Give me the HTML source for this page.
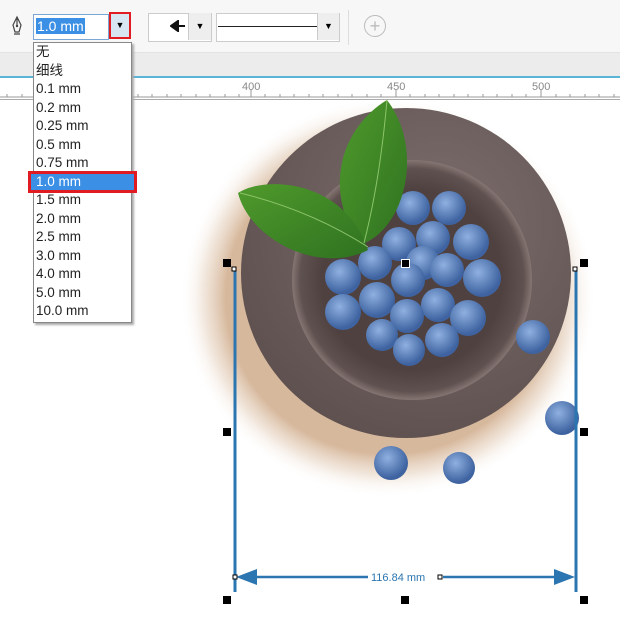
<!DOCTYPE html>
<html><head><meta charset="utf-8"><style>
body{margin:0;width:620px;height:617px;overflow:hidden;background:#fff;font-family:"Liberation Sans","Noto Sans CJK SC",sans-serif;position:relative}
.a{position:absolute}
#tb{left:0;top:0;width:620px;height:52px;background:#f7f7f7;border-bottom:1px solid #e2e2e2}
#band{left:0;top:53px;width:620px;height:23px;background:#ececec}
#bline{left:0;top:76px;width:620px;height:2px;background:#5ab4d6}
#ruler{left:0;top:78px;width:620px;height:21px;background:#fff;border-bottom:1px solid #aaa}
.rl{font-size:11px;color:#888;top:81px}
#dd{left:33px;top:42px;width:97px;height:279px;background:#fff;border:1px solid #888;box-shadow:2px 2px 2px #aaa}
#dd div{height:18.5px;line-height:18px;font-size:13.5px;color:#222;padding-left:2px}
.h{position:absolute;width:8px;height:8px;background:#000}
</style></head><body>
<div class="a" id="tb"></div>
<svg class="a" style="left:10px;top:15px" width="14" height="22"><path d="M7 2L3 10L5 17H9L11 10Z M7 2V11 M4 19H10" fill="none" stroke="#444" stroke-width="1.2"/><circle cx="7" cy="11" r="1.2" fill="#444"/></svg>
<div class="a" style="left:33px;top:14px;width:74px;height:24px;border:1px solid #7aa7d6;background:#fff"></div>
<div class="a" style="left:36px;top:18px;background:#3b8fe5;color:#fff;font-size:14px;line-height:16px;padding:0 1px">1.0 mm</div>
<div class="a" style="left:109px;top:12px;width:22px;height:27px;border:2px solid #e01b22;background:#d8e6f4;box-sizing:border-box;text-align:center;font-size:9px;line-height:23px">&#9660;</div>
<div class="a" style="left:148px;top:13px;width:62px;height:27px;border:1px solid #ccc;background:#fff"></div>
<svg class="a" style="left:170px;top:20px" width="16" height="12"><path d="M1 6L8 1V11Z M7 6H15" fill="#111" stroke="#111" stroke-width="2"/></svg>
<div class="a" style="left:188px;top:13px;width:22px;height:27px;border-left:1px solid #ccc;background:#eee;text-align:center;font-size:9px;line-height:27px">&#9660;</div>
<div class="a" style="left:216px;top:13px;width:122px;height:27px;border:1px solid #ccc;background:#fff"></div>
<div class="a" style="left:218px;top:26px;width:99px;height:1px;background:#222"></div>
<div class="a" style="left:317px;top:13px;width:21px;height:27px;border-left:1px solid #ccc;background:#eee;text-align:center;font-size:9px;line-height:27px">&#9660;</div>
<div class="a" style="left:348px;top:10px;width:1px;height:35px;background:#ddd"></div>
<div class="a" style="left:364px;top:15px;width:20px;height:20px;border:1px solid #bbb;border-radius:50%;color:#bbb;text-align:center;line-height:20px;font-size:18px">+</div>
<div class="a" id="band"></div>
<div class="a" id="bline"></div>
<div class="a" id="ruler"></div>
<svg class="a" style="left:0;top:78px" width="620" height="22">
<g stroke="#999" stroke-width="1">
<path d="M0 19H620"/>
<path d="M251 12V19M396 12V19M541 12V19"/>
<path d="M7 16V19M22 16V19M36 16V19M51 16V19M65 16V19M80 16V19M94 16V19M109 16V19M123 16V19M138 16V19M152 16V19M167 16V19M181 16V19M196 16V19M210 16V19M225 16V19M239 16V19M265 16V19M280 16V19M294 16V19M309 16V19M323 16V19M338 16V19M352 16V19M367 16V19M381 16V19M410 16V19M425 16V19M439 16V19M454 16V19M468 16V19M483 16V19M497 16V19M512 16V19M526 16V19M556 16V19M570 16V19M585 16V19M599 16V19M614 16V19"/>
</g></svg>
<div class="a rl" style="left:242px">400</div>
<div class="a rl" style="left:387px">450</div>
<div class="a rl" style="left:532px">500</div>

<svg class="a" style="left:0;top:0" width="620" height="617">
<defs>
<radialGradient id="shd" cx="0.5" cy="0.5" r="0.5"><stop offset="0.78" stop-color="#d2b091" stop-opacity="0.9"/><stop offset="0.88" stop-color="#e6d2bf" stop-opacity="0.6"/><stop offset="1" stop-color="#ffffff" stop-opacity="0"/></radialGradient>
<radialGradient id="pl" cx="0.6" cy="0.35" r="0.7"><stop offset="0" stop-color="#7c6e6c"/><stop offset="1" stop-color="#5e504e"/></radialGradient>
<radialGradient id="well" cx="0.5" cy="0.5" r="0.5"><stop offset="0.75" stop-color="#4f4140"/><stop offset="0.93" stop-color="#5f514f"/><stop offset="1" stop-color="#857573"/></radialGradient>
<radialGradient id="bb" cx="0.4" cy="0.35" r="0.6"><stop offset="0" stop-color="#8fb0e0"/><stop offset="1" stop-color="#3e63a0"/></radialGradient>
<linearGradient id="lf" x1="0" y1="0" x2="1" y2="1"><stop offset="0" stop-color="#4f9a2c"/><stop offset="1" stop-color="#2f7220"/></linearGradient>
</defs>
<ellipse cx="388" cy="298" rx="208" ry="200" fill="url(#shd)"/>
<circle cx="406" cy="273" r="165" fill="url(#pl)"/>
<circle cx="412" cy="280" r="120" fill="url(#well)"/>
<g fill="url(#bb)">
<circle cx="413" cy="208" r="17"/><circle cx="449" cy="208" r="17"/><circle cx="399" cy="244" r="17"/><circle cx="433" cy="238" r="17"/><circle cx="471" cy="242" r="18"/><circle cx="375" cy="263" r="17"/><circle cx="423" cy="263" r="17"/><circle cx="447" cy="270" r="17"/><circle cx="482" cy="278" r="19"/><circle cx="343" cy="277" r="18"/><circle cx="408" cy="280" r="17"/><circle cx="377" cy="300" r="18"/><circle cx="438" cy="305" r="17"/><circle cx="468" cy="318" r="18"/><circle cx="343" cy="312" r="18"/><circle cx="407" cy="316" r="17"/><circle cx="382" cy="335" r="16"/><circle cx="442" cy="340" r="17"/><circle cx="409" cy="350" r="16"/><circle cx="533" cy="337" r="17"/><circle cx="562" cy="418" r="17"/><circle cx="391" cy="463" r="17"/><circle cx="459" cy="468" r="16"/>
</g>
<path d="M387 100C345 125 320 185 360 245C405 230 425 150 387 100Z" fill="url(#lf)"/>
<path d="M238 193C265 175 345 180 368 250C320 275 250 240 238 193Z" fill="url(#lf)"/>
<path d="M387 100Q380 180 364 243M240 193Q310 210 368 247" stroke="#8cc46a" stroke-width="1" fill="none"/>
<g stroke="#2b75b0" stroke-width="3" fill="#2b75b0">
<path d="M235 270V592M576 268V592" fill="none"/>
<path d="M250 577H368M443 577H560" fill="none" stroke-width="2.5"/>
<path d="M236 577L257 569V585Z" stroke="none"/><path d="M575 577L554 569V585Z" stroke="none"/>
</g>
<rect x="232" y="267" width="4" height="4" fill="#fff" stroke="#000"/>
<rect x="573" y="267" width="4" height="4" fill="#fff" stroke="#000"/>
<rect x="438" y="575" width="4" height="4" fill="#fff" stroke="#000"/>
<rect x="233" y="575" width="4" height="4" fill="#fff" stroke="#000"/>
<text x="371" y="581" font-family="Liberation Sans" font-size="11" fill="#2b75b0">116.84 mm</text>
</svg>
<div class="h" style="left:223px;top:259px"></div><div class="h" style="left:401px;top:259px;border:1px solid #fff;width:7px;height:7px"></div><div class="h" style="left:580px;top:259px"></div>
<div class="h" style="left:223px;top:428px"></div><div class="h" style="left:580px;top:428px"></div>
<div class="h" style="left:223px;top:596px"></div><div class="h" style="left:401px;top:596px"></div><div class="h" style="left:580px;top:596px"></div>

<div class="a" id="dd">
<div>无</div><div>细线</div><div>0.1 mm</div><div>0.2 mm</div><div>0.25 mm</div><div>0.5 mm</div><div>0.75 mm</div>
<div style="background:#3b8fe5;color:#fff;outline:3px solid #e01b22;outline-offset:-1px;margin:0 -4px 0 -4px;padding-left:6px">1.0 mm</div>
<div>1.5 mm</div><div>2.0 mm</div><div>2.5 mm</div><div>3.0 mm</div><div>4.0 mm</div><div>5.0 mm</div><div>10.0 mm</div>
</div>
</body></html>
